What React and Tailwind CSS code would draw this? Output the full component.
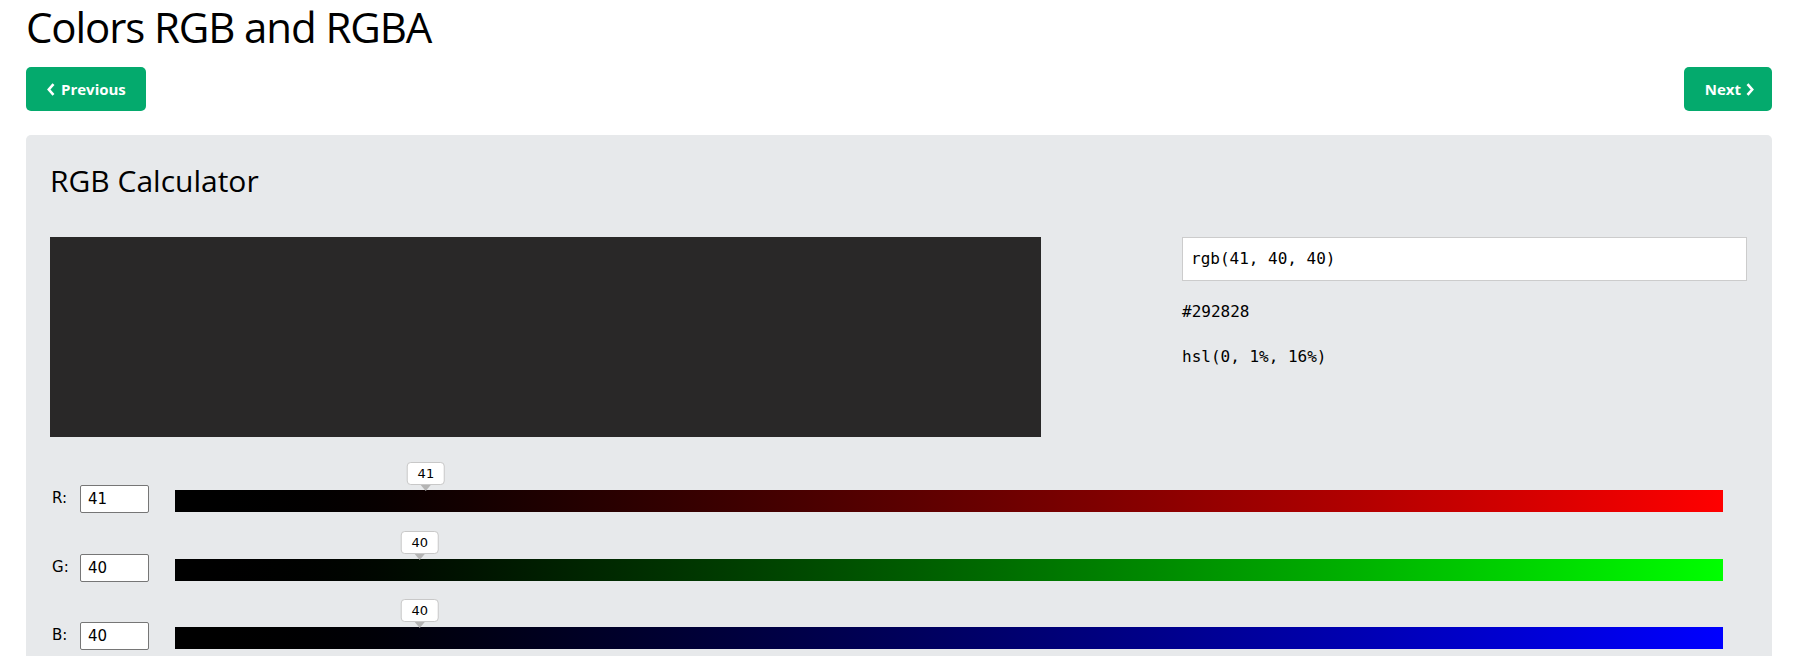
import React from 'react';

const RGB = [
  { label: 'R', value: 41, to: 'to-[#ff0000]' },
  { label: 'G', value: 40, to: 'to-[#00ff00]' },
  { label: 'B', value: 40, to: 'to-[#0000ff]' },
];

const Chevron = ({ dir = 'left' }) => (
  <svg width="8" height="13" viewBox="0 0 8 13" className="shrink-0">
    {dir === 'left' ? (
      <path d="M6.5 1.2 L1.8 6.5 L6.5 11.8" fill="none" stroke="currentColor" strokeWidth="2.6" strokeLinejoin="miter" />
    ) : (
      <path d="M1.5 1.2 L6.2 6.5 L1.5 11.8" fill="none" stroke="currentColor" strokeWidth="2.6" strokeLinejoin="miter" />
    )}
  </svg>
);

const SliderRow = ({ label, value, to }) => {
  const pct = (value / 255) * 100;
  return (
    <div className="flex items-start">
      <span className="w-[28px] ml-[2px] leading-[26px] text-[15px] text-black font-['DejaVu_Sans',sans-serif]">
        {label}:
      </span>
      <input
        readOnly
        value={value}
        className="w-[69px] h-[28px] bg-white border border-[#767676] rounded-[2px] pl-[7px] text-[15px] text-black font-['DejaVu_Sans',sans-serif] outline-none"
      />
      <div className={`relative flex-1 h-[22px] mt-[5px] ml-[26px] mr-[24px] bg-linear-to-r from-black ${to}`}>
        {/* value tooltip */}
        <div
          className="absolute bottom-full mb-[5px] ml-[2px] -translate-x-1/2 flex flex-col items-center"
          style={{ left: `${pct}%` }}>
          <div className="h-[23px] px-[10px] bg-white border border-[#c8c8c8] rounded-[4px] text-[13px] leading-[21px] text-black font-['DejaVu_Sans',sans-serif]">
            {value}
          </div>
          <div className="absolute top-full w-0 h-0 border-l-[5px] border-r-[5px] border-t-[6px] border-l-transparent border-r-transparent border-t-[#b4b4b4]" />
        </div>
      </div>
    </div>
  );
};

export default function App() {
  const [r, g, b] = RGB.map(c => c.value);
  return (
    <div className="min-h-screen bg-white pl-[26px] pr-[27px] font-['Open_Sans',sans-serif] text-black">
      <h1 className="text-[42px] leading-[54px] font-normal tracking-[-1.1px]">Colors RGB and RGBA</h1>

      {/* Prev / next */}
      <div className="flex justify-between mt-[13px]">
        <button className="h-[44px] pl-[21px] pr-[20px] flex items-center gap-[6px] bg-[#04AA6D] text-white rounded-[5px] text-[15px] font-bold">
          <Chevron dir="left" />
          Previous
        </button>
        <button className="h-[44px] pl-[21px] pr-[18px] flex items-center gap-[5px] bg-[#04AA6D] text-white rounded-[5px] text-[15px] font-bold">
          Next
          <Chevron dir="right" />
        </button>
      </div>

      {/* Calculator panel */}
      <div className="mt-[24px] bg-[#E7E9EB] rounded-[5px] pt-[28px] pl-[24px] pr-[25px] pb-[40px]">
        <h3 className="text-[30px] leading-[36px] font-normal">RGB Calculator</h3>

        <div className="flex mt-[38px]">
          <div className="w-[991px] h-[200px]" style={{ backgroundColor: `rgb(${r}, ${g}, ${b})` }} />
          <div className="ml-[141px] flex-1 font-['DejaVu_Sans_Mono',monospace] text-[16px]">
            <div className="h-[44px] bg-white border border-[#cccccc] pl-[8px] flex items-center">
              rgb({r}, {g}, {b})
            </div>
            <p className="mt-[19px] leading-[24px]">#292828</p>
            <p className="mt-[21px] leading-[24px]">hsl(0, 1%, 16%)</p>
          </div>
        </div>

        <div className="flex flex-col gap-[40.5px] mt-[48px]">
          {RGB.map(c => (
            <SliderRow key={c.label} {...c} />
          ))}
        </div>
      </div>
    </div>
  );
}
